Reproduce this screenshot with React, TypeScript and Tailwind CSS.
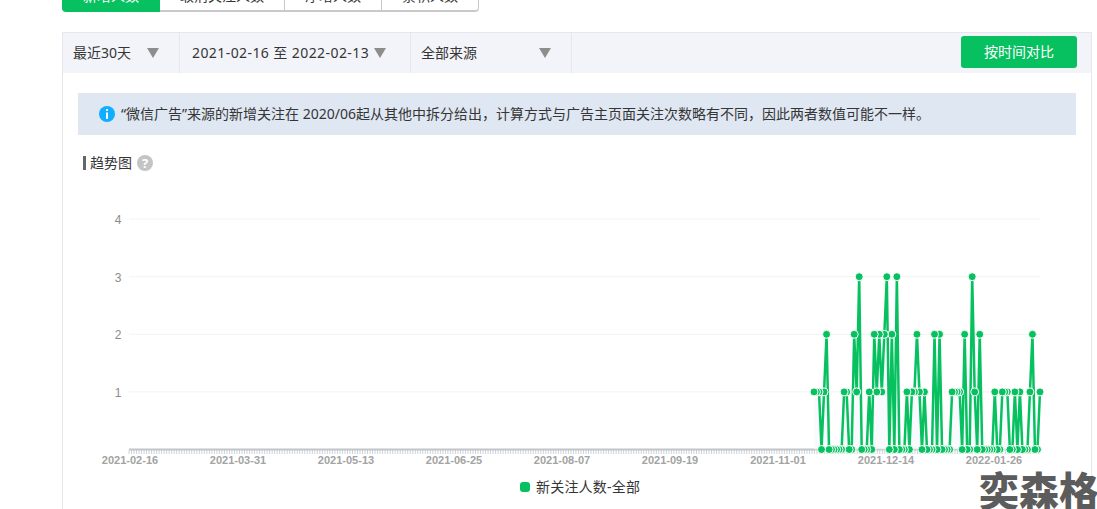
const tabs = [
  { label: '新增人数', width: 'w-[98px]', active: true },
  { label: '取消关注人数', width: 'w-[125px]', active: false },
  { label: '净增人数', width: 'w-[97px]', active: false },
  { label: '累积人数', width: 'w-[97px]', active: false },
]

const xLabels = [
  '2021-02-16',
  '2021-03-31',
  '2021-05-13',
  '2021-06-25',
  '2021-08-07',
  '2021-09-19',
  '2021-11-01',
  '2021-12-14',
  '2022-01-26',
]

// daily values, starting at the first day that has any data
const values = [
  1, 1, 1, 0, 1, 2, 0, 0, 0, 0, 0, 0, 1, 1, 0, 0, 2, 1, 3, 0, 0, 0, 1, 0, 2, 1, 2, 1, 2, 3, 0, 2, 0, 3, 0, 0, 0, 1, 0, 1,
  1, 2, 1, 0, 1, 0, 0, 0, 2, 0, 2, 0, 0, 0, 0, 1, 1, 1, 1, 0, 2, 0, 0, 3, 1, 0, 2, 0, 0, 0, 0, 0, 1, 0, 0, 1, 1, 1, 0, 0,
  1, 0, 1, 0, 0, 0, 1, 2, 0, 0, 1,
]

const AXIS_LEFT = 129
const AXIS_RIGHT = 1040
const DAY = 2.511
const px = (i: number) => 814 + i * DAY
const py = (v: number) => 449.5 - v * 57.6

function Arrow() {
  return (
    <svg width="12" height="10" viewBox="0 0 12 10" className="shrink-0">
      <path d="M0 0h12L6 10z" fill="#8d8d8d" />
    </svg>
  )
}

function TrendChart() {
  const line = values.map((v, i) => `${px(i)},${py(v)}`).join(' ')
  const ticks: number[] = []
  for (let x = AXIS_LEFT; x <= AXIS_RIGHT; x += DAY) ticks.push(x)

  return (
    <svg width="1028" height="302" className="block">
      <g transform="translate(-63 -175)">
        {[1, 2, 3, 4].map((v) => (
          <g key={v}>
            <line x1={AXIS_LEFT} x2={AXIS_RIGHT} y1={py(v)} y2={py(v)} stroke="#f3f3f3" />
            <text
              x={118}
              y={py(v) + 5}
              textAnchor="middle"
              fontSize="12"
              fontFamily="'Liberation Sans', sans-serif"
              fill="#8f8a86"
            >
              {v}
            </text>
          </g>
        ))}
        {ticks.map((x) => (
          <line key={x} x1={x} x2={x} y1={450} y2={454} stroke="#c9d3e2" />
        ))}
        <line x1={AXIS_LEFT} x2={AXIS_RIGHT} y1={449.5} y2={449.5} stroke="#c4c4c4" strokeWidth="2" />
        {xLabels.map((label, i) => (
          <text
            key={label}
            x={130 + i * 108}
            y={464}
            textAnchor="middle"
            fontSize="11"
            fontWeight="700"
            fontFamily="'Liberation Sans', sans-serif"
            fill="#a3a3a3"
          >
            {label}
          </text>
        ))}
        <polygon points={`${px(0)},449.5 ${line} ${px(90)},449.5`} fill="#f3f6fb" fillOpacity="0.6" />
        <polyline points={line} fill="none" stroke="#07c160" strokeWidth="2.5" strokeLinejoin="round" />
        {/* earlier points sit on top of later ones */}
        {values
          .map((v, i) => ({ v, i }))
          .reverse()
          .map(({ v, i }) => (
            <circle key={i} cx={px(i)} cy={py(v)} r="4" fill="#07c160" stroke="#fff" strokeWidth="1" />
          ))}
      </g>
    </svg>
  )
}

export default function App() {
  return (
    <div className="relative h-[509px] w-[1097px] overflow-hidden bg-white pl-[62px] font-['Noto_Sans','Noto_Sans_CJK_SC',sans-serif] text-sm text-[#353535]">
      <div className="mt-[-24px] flex h-9 w-[417px]">
        {tabs.map((tab, i) => (
          <div
            key={tab.label}
            className={`flex items-end justify-center border-b-2 pb-1 leading-5 ${tab.width} ${
              tab.active
                ? 'rounded-bl border-[#07c160] bg-[#07c160] text-white'
                : `border-r border-[#c9c9c9] ${i === tabs.length - 1 ? 'rounded-br' : ''}`
            }`}
          >
            {tab.label}
          </div>
        ))}
      </div>

      <div className="mt-5 h-[500px] w-[1030px] border border-b-0 border-[#e7e7eb]">
        <div className="flex h-10 items-center bg-[#f3f4f9] leading-5">
          <div className="flex h-full w-[117px] items-center border-r border-[#e7e7eb] pl-[10px]">
            <span className="w-[74px]">最近30天</span>
            <Arrow />
          </div>
          <div className="flex h-full w-[231px] items-center border-r border-[#e7e7eb] pl-3">
            <span className="w-[182px] whitespace-nowrap tracking-[0.42px]">2021-02-16 至 2022-02-13</span>
            <Arrow />
          </div>
          <div className="flex h-full w-[161px] items-center border-r border-[#e7e7eb] pl-[10px]">
            <span className="w-[118px]">全部来源</span>
            <Arrow />
          </div>
          <button className="mb-[2px] ml-auto mr-[14px] h-8 w-[116px] rounded-[3px] bg-[#07c160] text-white">
            按时间对比
          </button>
        </div>

        <div className="mx-[15px] mt-5 flex h-[42px] w-[998px] items-center bg-[#dfe7f3] pl-[21px]">
          <svg width="16" height="16" viewBox="0 0 16 16" className="mr-[6px] shrink-0">
            <circle cx="8" cy="8" r="8" fill="#10aeff" />
            <rect x="7" y="3" width="2" height="2" fill="#fff" />
            <rect x="7" y="6.5" width="2" height="6.5" fill="#fff" />
          </svg>
          <span className="whitespace-nowrap">
            “微信广告”来源的新增关注在 2020/06起从其他中拆分给出，计算方式与广告主页面关注次数略有不同，因此两者数值可能不一样。
          </span>
        </div>

        <div className="mt-[18px] flex h-5 items-center pl-5">
          <span className="mr-1 h-[14px] w-[3px] bg-[#666]" />
          <span>趋势图</span>
          <span className="ml-[5px] flex h-4 w-4 items-center justify-center rounded-full bg-[#c4c4c4] text-[13px] font-bold text-white">
            ?
          </span>
        </div>

        <div className="mt-[2px]">
          <TrendChart />
        </div>

        <div className="flex items-center pl-[457px] leading-5">
          <span className="mr-[6px] h-[10px] w-[10px] rounded-[3px] bg-[#07c160]" />
          <span className="tracking-[0.2px]">新关注人数-全部</span>
        </div>
      </div>

      <div className="absolute left-[979px] top-[463px] whitespace-nowrap text-[40px] font-black leading-[56px] text-[#5c5c5c] [text-shadow:0_0_3px_#fff]">
        奕森格
      </div>
    </div>
  )
}
